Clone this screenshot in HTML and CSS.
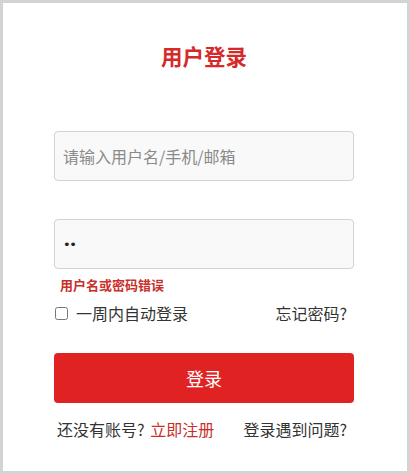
FILE: index.html
```html
<!DOCTYPE html>
<html lang="zh-CN">
<head>
<meta charset="utf-8">
<title>用户登录</title>
<link rel="stylesheet" href="styles.css">
</head>
<body>
<div class="frame">
  <form class="login">
    <h1 class="title">用户登录</h1>
    <input class="field field-user" type="text" placeholder="请输入用户名/手机/邮箱">
    <input class="field field-pass" type="password" value="12">
    <div class="error">用户名或密码错误</div>
    <div class="options">
      <label class="remember"><input class="check" type="checkbox">一周内自动登录</label>
      <a class="forgot" href="#">忘记密码?</a>
    </div>
    <button class="submit" type="button">登录</button>
    <div class="links">
      <span class="signup">还没有账号? <a class="signup-link" href="#">立即注册</a></span>
      <a class="help" href="#">登录遇到问题?</a>
    </div>
  </form>
</div>
</body>
</html>
```
FILE: styles.css
```css
html, body {
  margin: 0;
  padding: 0;
}
body {
  font-family: "Noto Sans CJK SC", "Noto Sans", sans-serif;
  color: #333;
  background: #fff;
}
.frame {
  box-sizing: border-box;
  width: 410px;
  height: 474px;
  border: 3px solid #d3d3d3;
  background: #fff;
  padding-top: 38px;
}
.login {
  width: 300px;
  margin: 0 0 0 51px;
  display: flex;
  flex-direction: column;
}
.title {
  margin: 0;
  text-align: center;
  font-size: 21.5px;
  line-height: 30px;
  font-weight: bold;
  color: #d42a2a;
}
.field {
  box-sizing: border-box;
  width: 300px;
  height: 50px;
  border: 1px solid #d2d2d2;
  border-radius: 4px;
  background: #f9f9f9;
  padding: 0 8px;
  font-family: inherit;
  font-size: 16px;
  color: #333;
  outline: none;
}
.field::placeholder {
  color: #8a8a8a;
}
.field-user {
  margin-top: 60px;
}
.field-pass {
  margin-top: 38px;
  font-family: "DejaVu Sans", sans-serif;
  font-size: 13px;
  letter-spacing: -1.5px;
  color: #222;
}
.error {
  margin-top: 6px;
  padding-left: 6px;
  font-size: 13px;
  line-height: 20px;
  font-weight: bold;
  color: #c9302c;
}
.options {
  margin-top: 6px;
  height: 24px;
  display: flex;
  align-items: center;
  justify-content: space-between;
  font-size: 16px;
}
.remember {
  display: flex;
  align-items: center;
  color: #333;
}
.check {
  width: 13px;
  height: 13px;
  margin: 0 8px 0 1px;
}
.forgot {
  color: #333;
  text-decoration: none;
  margin-right: 7px;
}
.submit {
  margin-top: 28px;
  height: 50px;
  border: none;
  border-radius: 4px;
  background: #e02222;
  color: #fff;
  font-family: inherit;
  font-size: 18px;
}
.links {
  margin-top: 14px;
  height: 24px;
  display: flex;
  justify-content: space-between;
  align-items: center;
  font-size: 16px;
  padding: 0 7px 0 3px;
}
.signup-link {
  color: #c9302c;
  text-decoration: none;
  margin-left: 2px;
}
.help {
  color: #333;
  text-decoration: none;
}
```
